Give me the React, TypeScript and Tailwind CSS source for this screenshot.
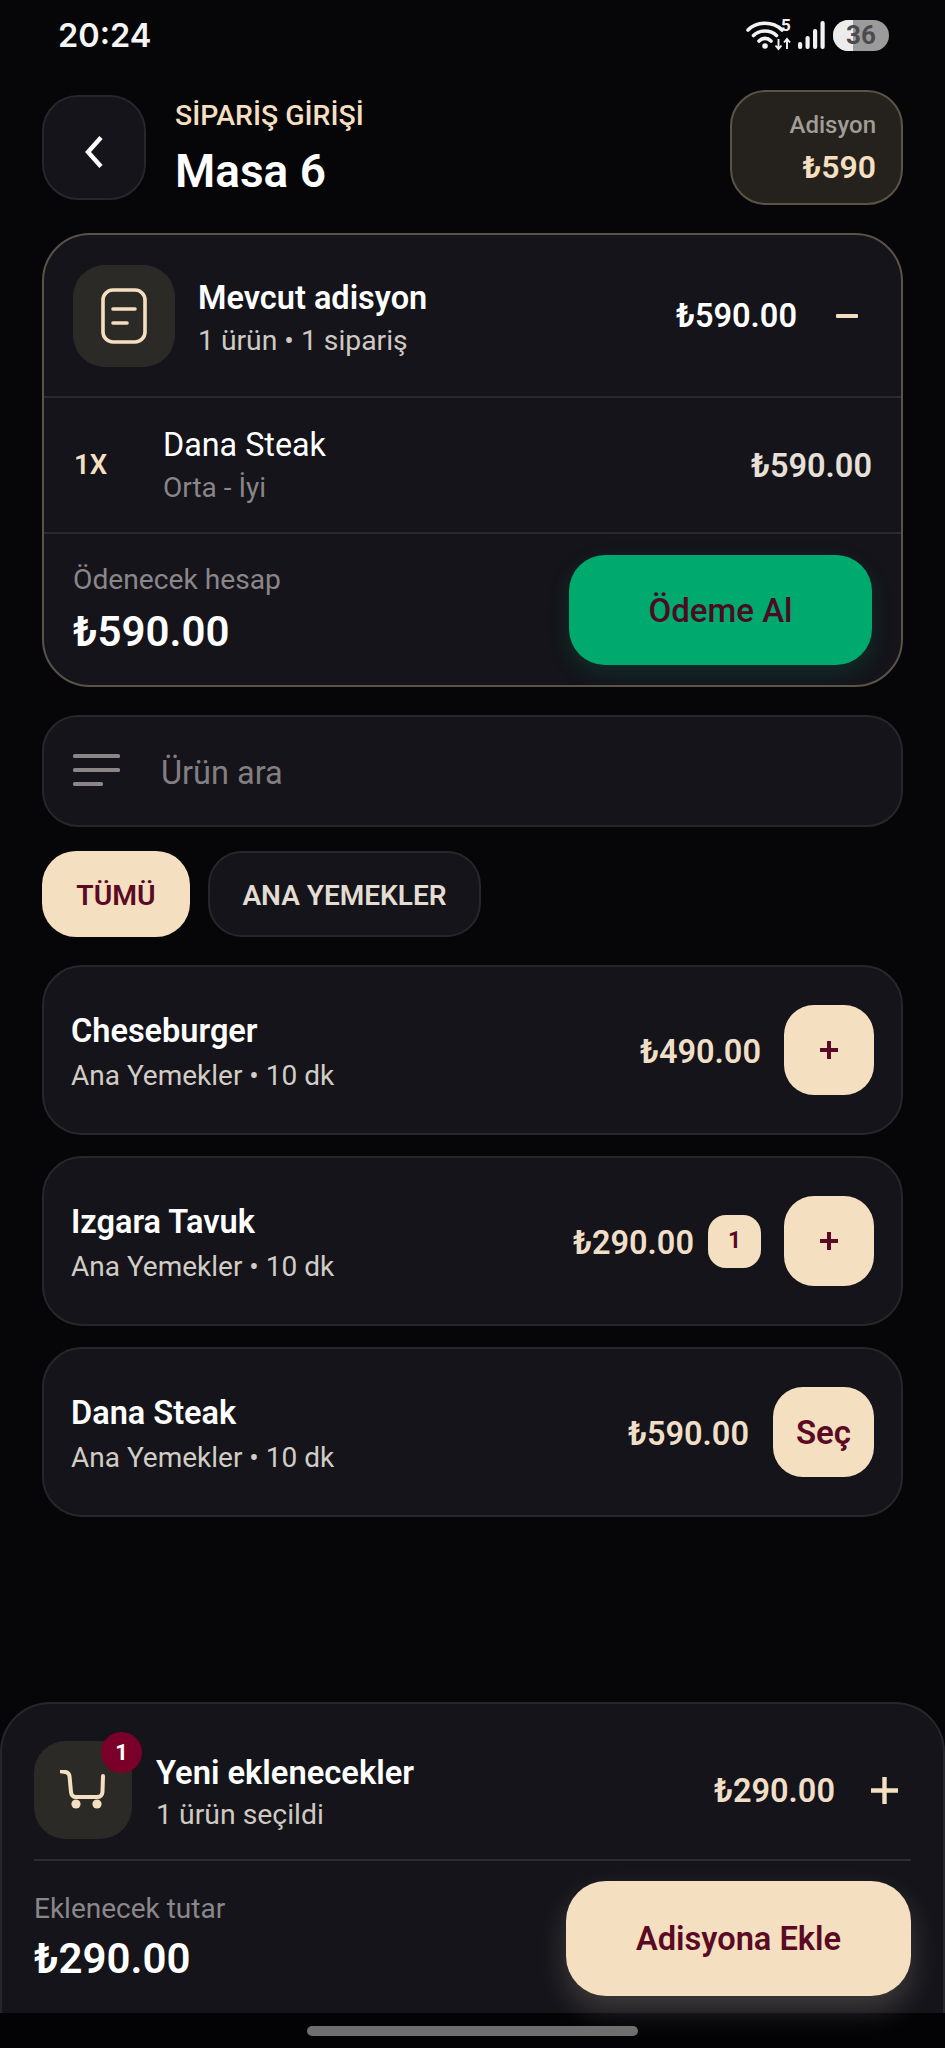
import React from "react";

const Cream = "#f5dfc1";

function Wifi() {
  return (
    <svg width="56" height="32" viewBox="0 0 56 32" fill="none">
      <path d="M2 11 C11 2 27 2 36 11" stroke="#f2f2f2" strokeWidth="3.6" strokeLinecap="round" />
      <path d="M7.5 16.5 C13.5 10.5 24.5 10.5 30.5 16.5" stroke="#f2f2f2" strokeWidth="3.6" strokeLinecap="round" />
      <path d="M13 22 C16.5 18.5 21.5 18.5 25 22" stroke="#f2f2f2" strokeWidth="3.6" strokeLinecap="round" />
      <circle cx="19" cy="27" r="2.8" fill="#f2f2f2" />
      <path d="M32.5 20 V30 M29.5 26.5 L32.5 30 L35.5 26.5" stroke="#f2f2f2" strokeWidth="1.9" />
      <path d="M41 30 V20 M38 23.5 L41 20 L44 23.5" stroke="#f2f2f2" strokeWidth="1.9" />
    </svg>
  );
}

function Signal() {
  return (
    <svg width="27" height="28" viewBox="0 0 27 28" fill="#f2f2f2">
      <rect x="0" y="21" width="4.2" height="7" rx="2" />
      <rect x="7.5" y="15" width="4.2" height="13" rx="2" />
      <rect x="15" y="8" width="4.2" height="20" rx="2" />
      <rect x="22.5" y="0" width="4.2" height="28" rx="2" />
    </svg>
  );
}

function Plus() {
  return (
    <svg width="18" height="18" viewBox="0 0 18 18" stroke="#5a0a24" strokeWidth="4">
      <path d="M0 9 H18 M9 0 V18" />
    </svg>
  );
}

function Product({ name, price, qty, action }: { name: string; price: string; qty?: string; action: "plus" | "sec" }) {
  return (
    <div className="h-[170px] rounded-[40px] border-2 border-[#26262c] bg-[#14141a] pl-[27px] pr-[27px] flex items-center justify-between">
      <div className="flex flex-col pt-[7px]">
        <div className="text-[32.5px] leading-[40px] font-semibold text-white">{name}</div>
        <div className="mt-[5px] text-[28px] leading-[40px] text-[#d2ccc6]">Ana Yemekler • 10 dk</div>
      </div>
      <div className="flex items-center">
        <div className="pt-[4px] text-[32.5px] font-semibold text-[#f0dfc6]">{price}</div>
        {qty && (
          <div className="ml-[14px] w-[53px] h-[53px] rounded-[18px] bg-[#f5dfc1] flex items-center justify-center text-[23px] font-bold text-[#5a0a24]">
            {qty}
          </div>
        )}
        {action === "plus" ? (
          <button className="ml-[23px] w-[90px] h-[90px] rounded-[30px] bg-[#f5dfc1] flex items-center justify-center">
            <Plus />
          </button>
        ) : (
          <button className="ml-[24px] w-[101px] h-[90px] rounded-[30px] bg-[#f5dfc1] pt-[2px] flex items-center justify-center text-[33px] font-semibold text-[#5a0a24]">
            Seç
          </button>
        )}
      </div>
    </div>
  );
}

export default function App() {
  return (
    <div className="w-[945px] h-[2048px] bg-[#060609] flex flex-col overflow-hidden font-['Roboto',sans-serif]">
      {/* status bar */}
      <div className="h-[90px] shrink-0 pl-[58px] pr-[56px] pt-[16px] flex justify-between items-start">
        <div className="text-[32.5px] leading-[40px] font-semibold text-[#f4f4f4] font-['Inter',sans-serif]">20:24</div>
        <div className="flex items-center h-[40px] mt-[-1px]">
          <div className="relative ml-[4px]">
            <Wifi />
            <span className="absolute left-[35px] top-[-4px] text-[17px] leading-[20px] font-bold text-[#f2f2f2]">5</span>
          </div>
          <div className="ml-[-4px]"><Signal /></div>
          <div className="relative ml-[8px] w-[56px] h-[31px] rounded-full bg-[#9b9b9b] overflow-hidden flex items-center justify-center">
            <div className="absolute left-0 top-0 bottom-0 w-[20px] bg-[#ececec]" />
            <span className="relative text-[26px] font-bold text-[#4b4b4d] leading-none">36</span>
          </div>
        </div>
      </div>

      <div className="flex-1 flex flex-col px-[42px]">
        {/* header */}
        <div className="h-[115px] shrink-0 flex items-center justify-between">
          <div className="flex items-center">
            <button className="w-[104px] h-[105px] rounded-[36px] bg-[#14141a] border-2 border-[#26262c] flex items-center justify-center pt-[9px]">
              <svg width="18" height="32" viewBox="0 0 18 32" fill="none" stroke="#ffffff" strokeWidth="4.4">
                <path d="M16 1.5 L3 16 L16 30.5" />
              </svg>
            </button>
            <div className="ml-[29px] flex flex-col pt-[3px]">
              <div className="text-[28.4px] leading-[32px] font-medium text-[#f5dfc1]">SİPARİŞ GİRİŞİ</div>
              <div className="mt-[11px] text-[46px] leading-[56px] font-semibold text-white">Masa 6</div>
            </div>
          </div>
          <div className="w-[173px] h-[115px] rounded-[36px] bg-[#25221e] border-2 border-[#5a5347] flex flex-col items-end justify-center pr-[25px]">
            <div className="text-[24px] leading-[30px] font-medium text-[#a29d97]">Adisyon</div>
            <div className="mt-[9px] text-[32px] leading-[36px] font-semibold text-[#f5dfc1]">₺590</div>
          </div>
        </div>

        {/* current bill */}
        <div className="mt-[28px] h-[454px] shrink-0 rounded-[48px] border-2 border-[#5a5347] bg-[#14141a] flex flex-col overflow-hidden">
          <div className="h-[161px] shrink-0 pl-[29px] pr-[43px] flex items-center justify-between">
            <div className="flex items-center">
              <div className="w-[102px] h-[102px] rounded-[32px] bg-[#2c2a27] flex items-center justify-center">
                <svg width="46" height="56" viewBox="0 0 46 56" fill="none" stroke={Cream} strokeWidth="3.6" strokeLinecap="round">
                  <rect x="2" y="2" width="42" height="52" rx="10" />
                  <path d="M12 21 H34 M12 35 H26" />
                </svg>
              </div>
              <div className="ml-[23px] flex flex-col pt-[6px]">
                <div className="text-[32.5px] leading-[40px] font-semibold text-white">Mevcut adisyon</div>
                <div className="mt-[5px] text-[28.3px] leading-[36px] text-[#cfc9c3]">1 ürün • 1 sipariş</div>
              </div>
            </div>
            <div className="flex items-center">
              <div className="pt-[2px] text-[32.5px] font-semibold text-white">₺590.00</div>
              <div className="ml-[39px] w-[22px] h-[4px] bg-[#f5dfc1] rounded-[1px]" />
            </div>
          </div>
          <div className="h-[2px] bg-[#29292f] shrink-0" />
          <div className="h-[134px] shrink-0 pl-[30px] pr-[29px] flex items-center justify-between">
            <div className="flex items-center">
              <div className="w-[60px] text-[27.5px] font-semibold text-[#f5dfc1]">1X</div>
              <div className="ml-[29px] flex flex-col pt-[1px]">
                <div className="text-[32.3px] leading-[40px] text-white">Dana Steak</div>
                <div className="mt-[5px] text-[28px] leading-[36px] text-[#8a8587]">Orta - İyi</div>
              </div>
            </div>
            <div className="pt-[3px] text-[32.5px] font-semibold text-[#e6e0d8]">₺590.00</div>
          </div>
          <div className="h-[2px] bg-[#29292f] shrink-0" />
          <div className="flex-1 pl-[29px] pr-[29px] pt-[21px] flex justify-between items-start">
            <div className="flex flex-col">
              <div className="mt-[7px] text-[28.2px] leading-[36px] text-[#8b8689]">Ödenecek hesap</div>
              <div className="mt-[8px] text-[42px] leading-[52px] font-semibold text-white">₺590.00</div>
            </div>
            <button className="w-[303px] h-[110px] rounded-[36px] bg-[#00a96e] pt-[2px] shadow-[0_8px_22px_rgba(0,169,110,0.18)] flex items-center justify-center text-[33px] font-medium text-[#4a0c22]">
              Ödeme Al
            </button>
          </div>
        </div>

        {/* search */}
        <div className="mt-[28px] h-[112px] shrink-0 rounded-[36px] border-2 border-[#26262c] bg-[#14141a] pl-[29px] flex items-center">
          <svg width="48" height="34" viewBox="0 0 48 34" fill="#8a8586">
            <rect x="0" y="0" width="47" height="4" rx="1.5" />
            <rect x="0" y="14" width="47" height="4" rx="1.5" />
            <rect x="0" y="28" width="30" height="4" rx="1.5" />
          </svg>
          <div className="ml-[40px] pt-[5px] text-[32.5px] text-[#837e80]">Ürün ara</div>
        </div>

        {/* chips */}
        <div className="mt-[24px] h-[86px] shrink-0 flex gap-[18px]">
          <button className="w-[148px] rounded-[34px] bg-[#f5dfc1] pt-[4px] text-[28.3px] font-semibold text-[#5a0a24]">TÜMÜ</button>
          <button className="w-[273px] rounded-[34px] bg-[#14141a] border-2 border-[#26262c] pt-[4px] text-[28px] font-semibold text-[#e3dcd3]">
            ANA YEMEKLER
          </button>
        </div>

        {/* products */}
        <div className="mt-[28px] flex flex-col gap-[21px]">
          <Product name="Cheseburger" price="₺490.00" action="plus" />
          <Product name="Izgara Tavuk" price="₺290.00" qty="1" action="plus" />
          <Product name="Dana Steak" price="₺590.00" action="sec" />
        </div>
      </div>

      {/* bottom sheet */}
      <div className="relative z-10 h-[311px] shrink-0 rounded-t-[50px] border-2 border-b-0 border-[#26262c] bg-[#14141a] px-[32px] pt-[37px] flex flex-col">
        <div className="h-[98px] shrink-0 flex items-center justify-between pr-[13px]">
          <div className="flex items-center">
            <div className="relative w-[98px] h-[98px] rounded-[32px] bg-[#2c2a27] flex items-center justify-center">
              <svg width="46" height="40" viewBox="0 0 46 40" fill="none" stroke={Cream} strokeWidth="4" strokeLinecap="round">
                <path d="M1.5 1.5 C6 1.5 9 2.5 9.5 6 L11 22 Q11.5 27 16 27 L37 27 Q42 27 42.5 22 L43 6" />
                <circle cx="16" cy="34" r="4.6" fill={Cream} stroke="none" />
                <circle cx="37" cy="34" r="4.6" fill={Cream} stroke="none" />
              </svg>
              <div className="absolute right-[-10px] top-[-9px] w-[41px] h-[41px] rounded-full bg-[#7a0029] flex items-center justify-center text-[22px] font-bold text-white">
                1
              </div>
            </div>
            <div className="ml-[24px] flex flex-col pt-[5px]">
              <div className="text-[32.7px] leading-[40px] font-semibold text-white">Yeni eklenecekler</div>
              <div className="mt-[4px] text-[28.4px] leading-[36px] text-[#cfc9c3]">1 ürün seçildi</div>
            </div>
          </div>
          <div className="flex items-center">
            <div className="pt-[2px] text-[32.5px] font-semibold text-[#f0dfc6]">₺290.00</div>
            <svg className="ml-[36px]" width="27" height="27" viewBox="0 0 27 27" stroke={Cream} strokeWidth="4.4">
              <path d="M0 13.5 H27 M13.5 0 V27" />
            </svg>
          </div>
        </div>
        <div className="mt-[20px] h-[2px] bg-[#2d2b30] shrink-0" />
        <div className="mt-[20px] flex justify-between items-start">
          <div className="flex flex-col">
            <div className="mt-[10px] text-[28px] leading-[36px] text-[#8b8689]">Eklenecek tutar</div>
            <div className="mt-[6px] text-[42px] leading-[52px] font-semibold text-white">₺290.00</div>
          </div>
          <button className="w-[345px] h-[115px] rounded-[40px] bg-[#f5dfc1] pt-[2px] shadow-[0_14px_30px_rgba(245,223,193,0.2)] flex items-center justify-center text-[32.6px] font-semibold text-[#5a0a24]">
            Adisyona Ekle
          </button>
        </div>
      </div>

      {/* nav */}
      <div className="h-[35px] shrink-0 bg-[#030306] flex justify-center pt-[13px]">
        <div className="w-[331px] h-[10px] rounded-full bg-[#6e6e6e]" />
      </div>
    </div>
  );
}
